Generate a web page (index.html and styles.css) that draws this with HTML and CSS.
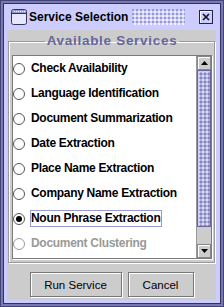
FILE: index.html
```html
<!DOCTYPE html>
<html lang="en">
<head>
<meta charset="UTF-8">
<title>Service Selection</title>
<link rel="stylesheet" href="styles.css">
</head>
<body>
<div class="window">
  <div class="frame">
    <div class="titlebar">
      <svg class="win-icon" width="16" height="16" viewBox="0 0 16 16">
        <rect x="0.5" y="0.5" width="15" height="15" rx="2" fill="#e6e6ff" stroke="#333355"/>
        <rect x="1" y="1" width="14" height="3.5" fill="#9999cc"/>
        <line x1="1" y1="4.5" x2="15" y2="4.5" stroke="#333355"/>
        <g fill="#ffffff">
          <rect x="3" y="2" width="1" height="1"/><rect x="5" y="2" width="1" height="1"/>
          <rect x="7" y="2" width="1" height="1"/><rect x="9" y="2" width="1" height="1"/>
          <rect x="11" y="2" width="1" height="1"/><rect x="13" y="2" width="1" height="1"/>
        </g>
      </svg>
      <span class="title">Service Selection</span>
      <div class="bumps"></div>
      <svg class="close" width="14" height="14" viewBox="0 0 14 14">
        <rect x="0.5" y="0.5" width="13" height="13" fill="#ccccff" stroke="#222244"/>
        <path d="M1.5 12.5V1.5H12.5" fill="none" stroke="#ffffff"/>
        <path d="M4 4L10 10M10 4L4 10" stroke="#111122" stroke-width="1.6"/>
      </svg>
    </div>
    <div class="content">
      <fieldset class="group">
        <legend>Available Services</legend>
        <div class="listbox">
          <div class="list">
            <div class="item"><span class="radio"></span><span class="label">Check Availability</span></div>
            <div class="item"><span class="radio"></span><span class="label">Language Identification</span></div>
            <div class="item"><span class="radio"></span><span class="label">Document Summarization</span></div>
            <div class="item"><span class="radio"></span><span class="label">Date Extraction</span></div>
            <div class="item"><span class="radio"></span><span class="label">Place Name Extraction</span></div>
            <div class="item"><span class="radio"></span><span class="label">Company Name Extraction</span></div>
            <div class="item selected"><span class="radio"></span><span class="label">Noun Phrase Extraction</span></div>
            <div class="item disabled"><span class="radio"></span><span class="label">Document Clustering</span></div>
          </div>
          <div class="scrollbar">
            <div class="arrow">
              <svg width="7" height="4" viewBox="0 0 7 4"><path d="M0 4L3.5 0L7 4Z" fill="#000"/></svg>
            </div>
            <div class="thumb"></div>
            <div class="track"></div>
            <div class="arrow">
              <svg width="7" height="4" viewBox="0 0 7 4"><path d="M0 0L3.5 4L7 0Z" fill="#000"/></svg>
            </div>
          </div>
        </div>
      </fieldset>
      <div class="buttons">
        <button class="run">Run Service</button>
        <button class="cancel">Cancel</button>
      </div>
    </div>
  </div>
</div>
</body>
</html>
```

FILE: styles.css
```css
* {
    box-sizing: border-box;
}
body {
    margin: 0;
    background: #ccccff;
    font-family: "Liberation Sans", Arial, sans-serif;
}
.window {
    width: 224px;
    height: 307px;
    border: 1px solid #444477;
    background: #7878b4;
    padding: 2px;
}
.frame {
    height: 100%;
    border: 1px solid #333355;
    background: #ccccff;
    padding: 0 4px 3px 3px;
}
.titlebar {
    height: 26px;
    display: flex;
    align-items: center;
    padding-left: 4px;
}
.win-icon {
    flex: none;
}
.title {
    margin-left: 2px;
    font-size: 12px;
    font-weight: bold;
    color: #000;
    white-space: nowrap;
}
.bumps {
    flex: 1;
    height: 16px;
    margin: 0 14px 0 4px;
    background-image:
        radial-gradient(circle at 1px 1px, #9a9acc 0.8px, transparent 0.9px),
        radial-gradient(circle at 1px 1px, #f2f2ff 0.8px, transparent 0.9px);
    background-size: 4px 4px, 4px 4px;
    background-position: 0 0, 2px 2px;
}
.close {
    flex: none;
    margin-right: 3px;
}
.content {
    height: 270px;
    background: #cccccc;
    padding: 4px 1px 0 1px;
}
.group {
    margin: 0;
    min-width: 0;
    border: 1px solid #999999;
    box-shadow: 1px 1px 0 #ffffff, inset 1px 1px 0 #ffffff;
    padding: 7px 2px 3px 3px;
}
.group legend {
    margin: 0 auto;
    padding: 0 2px;
    font-size: 13.5px;
    line-height: 14px;
    font-weight: bold;
    letter-spacing: 0.7px;
    color: #666699;
}
.listbox {
    display: flex;
    height: 204px;
    width: 200px;
    border: 1px solid #7a7a7a;
    box-shadow: 1px 1px 0 #ffffff;
    background: #ffffff;
}
.list {
    flex: 1;
    overflow: hidden;
}
.item {
    height: 25px;
    display: flex;
    align-items: center;
    gap: 5px;
    font-size: 12px;
    font-weight: bold;
    letter-spacing: -0.3px;
    color: #000;
    white-space: nowrap;
}
.radio {
    position: relative;
    flex: none;
    width: 12px;
    height: 12px;
    border: 1px solid #555555;
    border-radius: 50%;
    background: #ffffff;
}
.label {
    border: 1px solid transparent;
    padding: 0 1px 0 0;
    line-height: 15px;
}
.selected .label {
    border-color: #9999cc;
}
.selected .radio::after {
    content: "";
    position: absolute;
    left: 2px;
    top: 2px;
    width: 6px;
    height: 6px;
    border-radius: 50%;
    background: #000;
}
.disabled {
    color: #999999;
}
.disabled .radio {
    border-color: #999999;
}
.scrollbar {
    width: 15px;
    display: flex;
    flex-direction: column;
    background: #cccccc;
    border-left: 1px solid #999999;
}
.arrow {
    height: 14px;
    display: flex;
    align-items: center;
    justify-content: center;
    border: 1px solid #888888;
    box-shadow: inset 1px 1px 0 #ffffff;
}
.thumb {
    height: 157px;
    border: 1px solid #666699;
    background-color: #b0b0e0;
    background-image:
        radial-gradient(circle at 1px 1px, #dcdcff 0.8px, transparent 0.9px),
        radial-gradient(circle at 1px 1px, #8686bb 0.8px, transparent 0.9px);
    background-size: 4px 4px, 4px 4px;
    background-position: 0 0, 2px 2px;
    box-shadow: inset 1px 1px 0 #ccccff;
}
.track {
    flex: 1;
}
.buttons {
    display: flex;
    justify-content: center;
    gap: 6px;
    margin-top: 9px;
}
button {
    height: 25px;
    border: 1px solid #777777;
    box-shadow: 1px 1px 0 #ffffff, inset 1px 1px 0 #ffffff;
    background: #cccccc;
    font-family: "Liberation Sans", Arial, sans-serif;
    font-size: 11.5px;
    color: #000;
    padding: 0;
}
.run {
    width: 92px;
}
.cancel {
    width: 66px;
}
```
